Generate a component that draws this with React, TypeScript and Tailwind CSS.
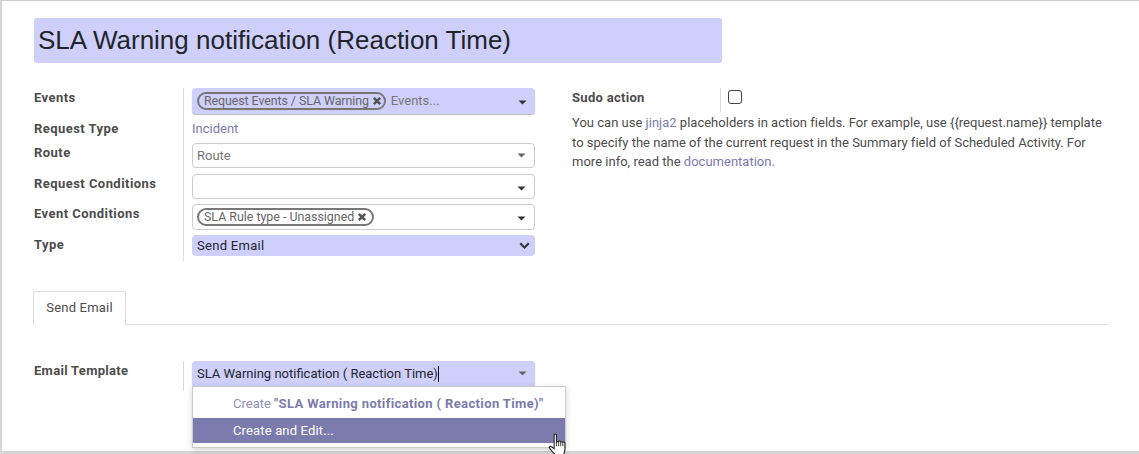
/**
 * SLA rule form
 */

const field = 'w-[343px] flex items-center rounded-[4px] pr-[8px]';

function Caret({ light, low }: { light?: boolean; low?: boolean }) {
  return (
    <svg className={`ml-auto shrink-0 ${low ? 'mt-[3px]' : ''}`} width="9" height="5" viewBox="0 0 9 5">
      <path d="M0.5 0.5H8.5L4.5 4.5Z" fill={light ? '#666' : '#333'} />
    </svg>
  );
}

function Chip({ label, className }: { label: string; className: string }) {
  return (
    <span className={`flex h-[18px] items-center gap-[3px] rounded-full border-2 border-[#777] pl-[5px] text-[12.4px] text-[#666] whitespace-nowrap ${className}`}>
      {label}
      <svg width="10" height="10" viewBox="0 0 10 10">
        <path d="M1.8 1.8L8.2 8.2M8.2 1.8L1.8 8.2" stroke="#555" strokeWidth="2.6" />
      </svg>
    </span>
  );
}

function Label({ text, className }: { text: string; className: string }) {
  return (
    <div className={`w-[149px] shrink-0 font-bold text-[13px] leading-[15px] tracking-[0.45px] text-[#4c4c4c] ${className}`}>
      {text}
    </div>
  );
}

function HandCursor() {
  return (
    <svg className="absolute left-[546px] top-[432px]" width="20" height="21" viewBox="0 0 18 19">
      <path
        d="M5.5 1.8C5.5 0.6 7.6 0.6 7.6 1.8V8.2L9.6 7.6C9.6 7 11.4 7 11.5 7.9L13.3 8.2C13.5 7.8 15.2 8 15.3 9V15C15.3 17 14.4 18 14 20H6.5C6.2 18.5 2 15.5 1.2 13.4C0.8 12.2 2.2 11.6 3.2 12.5L5.5 14.2Z"
        fill="#fff"
        stroke="#222"
        strokeWidth="1"
      />
      <path d="M7.6 8.2V12M9.6 7.6V12M11.5 7.9V12M13.4 8.2V12" stroke="#222" strokeWidth="0.8" />
    </svg>
  );
}

export default function App() {
  return (
    <div className="relative h-[454px] w-[1139px] border-t border-l-2 border-b-[3px] border-t-[#ccc] border-l-[#d5d5d5] border-b-[#d5d5d5] bg-white pl-[32px] pt-[17px] font-['Roboto',sans-serif] text-[13px] text-[#4c4c4c]">
      <div className="flex h-[45px] w-[688px] items-center rounded-[3px] bg-[#cfcffb] pl-[4px] font-['Liberation_Sans',sans-serif] text-[26px] text-[#212529]">
        SLA Warning notification (Reaction Time)
      </div>

      <div className="mt-[25px] flex">
        <div className="flex w-[538px] shrink-0">
          <div className="flex w-[149px] shrink-0 flex-col">
            <Label text="Events" className="mt-[2px]" />
            <Label text="Request Type" className="mt-[16px]" />
            <Label text="Route" className="mt-[9px]" />
            <Label text="Request Conditions" className="mt-[16px]" />
            <Label text="Event Conditions" className="mt-[15px]" />
            <Label text="Type" className="mt-[16px]" />
          </div>
          <div className="flex h-[173px] flex-col border-l border-[#ddd] pl-[8px]">
            <div className={`${field} h-[26px] gap-[5px] bg-[#cfcffb] pl-[5px] shadow-[0_1px_1px_#bbb]`}>
              <Chip label="Request Events / SLA Warning" className="pr-[2px] tracking-[-0.07px]" />
              <span className="text-[#777]">Events...</span>
              <Caret low />
            </div>
            <div className="mt-[7px] h-[15px] leading-[15px] text-[#7c7bad]">Incident</div>
            <div className={`${field} mt-[7px] h-[25px] border border-[#ccc] pl-[4px] text-[#777]`}>
              Route
              <Caret light />
            </div>
            <div className={`${field} mt-[6px] h-[25px] border border-[#ccc] pl-[4px]`}>
              <Caret low />
            </div>
            <div className={`${field} mt-[5px] h-[26px] border border-[#ccc] pl-[4px]`}>
              <Chip label="SLA Rule type - Unassigned" className="pr-[5px]" />
              <Caret low />
            </div>
            <div className={`${field} mt-[5px] h-[21px] bg-[#cfcffb] pl-[5px] tracking-[0.3px] text-[#212529]`}>
              Send Email
              <svg className="ml-auto -mr-[3px]" width="11" height="7" viewBox="0 0 11 7">
                <path d="M1.2 1.2L5.5 5.5L9.8 1.2" fill="none" stroke="#333" strokeWidth="2" />
              </svg>
            </div>
          </div>
        </div>

        <div className="w-[540px]">
          <div className="flex h-[24px]">
            <Label text="Sudo action" className="!w-[149px] h-[24px] border-r border-[#ddd] pt-[2px] !tracking-[0.3px]" />
            <div className="ml-[7px] mt-[2px] h-[14px] w-[14px] rounded-[3px] border border-[#444]" />
          </div>
          <p className="mt-[1px] text-[13px] leading-[19.5px] tracking-[0.01px]">
            You can use <span className="text-[#7c7bad]">jinja2</span> placeholders in action fields. For example, use {'{{request.name}}'} template
            to specify the name of the current request in the Summary field of Scheduled Activity. For more info, read the{' '}
            <span className="text-[#7c7bad]">documentation.</span>
          </p>
        </div>
      </div>

      <div className="-ml-px mt-[30px] w-[1075px] border-b border-[#ddd]">
        <div className="-mb-px flex h-[34px] w-[93px] items-center justify-center rounded-t-[3px] border border-[#ddd] border-b-white bg-white tracking-[0.2px]">
          Send Email
        </div>
      </div>

      <div className="mt-[36px] flex">
        <Label text="Email Template" className="mt-[2px] !tracking-[0.3px]" />
        <div className="h-[30px] border-l border-[#ddd] pl-[8px]">
          <div className={`${field} h-[25px] bg-[#cfcffb] pl-[5px] text-[#212529] shadow-[0_1px_1px_#bbb]`}>
            SLA Warning notification ( Reaction Time)<span className="h-[16px] w-px bg-black" />
            <Caret light />
          </div>
        </div>
      </div>

      <div className="absolute left-[190px] top-[385px] h-[62px] w-[374px] border border-[#ccc] bg-white shadow-[0_2px_6px_rgba(0,0,0,0.18)]">
        <div className="flex h-[31px] items-center whitespace-pre pl-[40px] pt-[3px] text-[#8f8fb8]">
          Create <b className="font-bold tracking-[0.37px] text-[#7c7bad]">"SLA Warning notification ( Reaction Time)"</b>
        </div>
        <div className="flex h-[25px] items-center bg-[#7c7bad] pl-[40px] tracking-[0.15px] text-white">Create and Edit...</div>
      </div>

      <HandCursor />
    </div>
  );
}
